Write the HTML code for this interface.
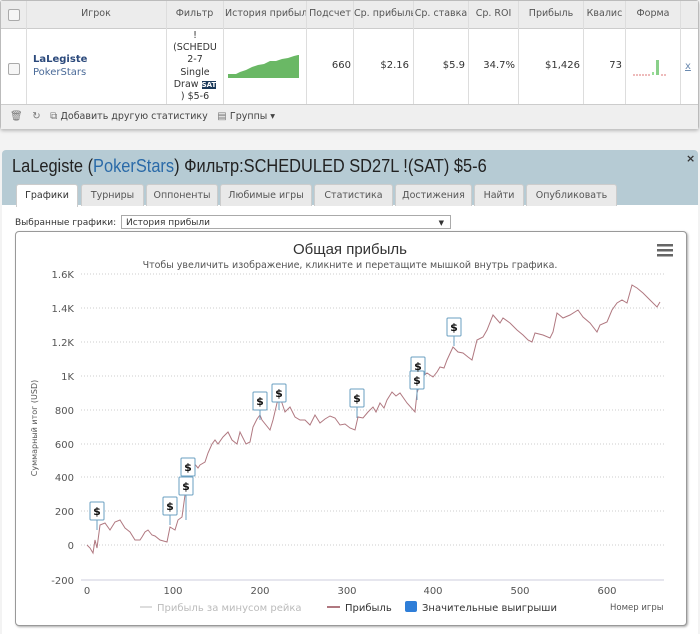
<!DOCTYPE html>
<html><head><meta charset="utf-8"><style>
body{margin:0;width:700px;height:634px;background:#f3f3f3;font-family:"DejaVu Sans","Liberation Sans",sans-serif;font-size:10px;color:#333;position:relative;overflow:hidden}
.a{position:absolute}
#tbl{left:0;top:0;width:697px;height:127px;border:1px solid #bbb;border-radius:3px;background:#fff;box-shadow:0 2px 3px #bbb}
.hd{top:0;height:27px;background:#ececec;border-bottom:1px solid #ccc;width:697px}
.c{position:absolute;top:0;height:103px;border-left:1px solid #ddd}
.h{position:absolute;top:7px;font-size:9.5px;color:#555;text-align:center;white-space:nowrap;overflow:hidden}
.v{position:absolute;top:59px;font-size:10px;text-align:right;color:#333}
.ft{top:103px;height:24px;width:697px;background:#efefef;border-top:1px solid #ccc}
.cb{position:absolute;width:10px;height:10px;border:1px solid #aaa;border-radius:2px;background:#f6f6f6}
#pan{left:2px;top:150px;width:696px;height:484px;background:#b6cbd4;border-radius:4px 4px 0 0}
.tab{position:absolute;top:184px;height:21px;background:#e9e9e9;border:1px solid #ccc;border-bottom:none;border-radius:3px 3px 0 0;font-size:9.5px;color:#555;text-align:center;line-height:21px}
#cont{left:2px;top:205px;width:696px;height:429px;background:#fff}
</style></head><body>
<div id="tbl" class="a">
 <div class="a hd"></div>
 <div class="cb" style="left:7px;top:8px"></div>
 <div class="c" style="left:25px"></div><div class="c" style="left:165px"></div><div class="c" style="left:222px"></div><div class="c" style="left:305px"></div><div class="c" style="left:352px"></div><div class="c" style="left:412px"></div><div class="c" style="left:467px"></div><div class="c" style="left:517px"></div><div class="c" style="left:582px"></div><div class="c" style="left:624px"></div><div class="c" style="left:679px"></div>
 <div class="h" style="left:25px;width:140px">Игрок</div>
 <div class="h" style="left:165px;width:57px">Фильтр</div>
 <div class="h" style="left:224px;width:81px">История прибыли</div>
 <div class="h" style="left:306px;width:46px">Подсчет</div>
 <div class="h" style="left:353px;width:59px">Ср. прибыль</div>
 <div class="h" style="left:413px;width:54px">Ср. ставка</div>
 <div class="h" style="left:468px;width:49px">Ср. ROI</div>
 <div class="h" style="left:518px;width:64px">Прибыль</div>
 <div class="h" style="left:583px;width:41px">Квалис</div>
 <div class="h" style="left:625px;width:54px">Форма</div>
 <div class="cb" style="left:7px;top:62px"></div>
 <div class="a" style="left:32px;top:53px;font-size:10px;font-weight:bold;color:#2c4a7c">LaLegiste</div>
 <div class="a" style="left:32px;top:66px;font-size:10px;color:#4a6a98">PokerStars</div>
 <div class="a" style="left:166px;top:29px;width:56px;text-align:center;font-size:9.5px;line-height:12.2px">!<br>(SCHEDU<br>2-7<br>Single<br>Draw <span style="background:#1b3a5a;color:#fff;font-size:7px;font-weight:bold">SAT</span><br>) $5-6</div>
 <svg class="a" style="left:227px;top:52px" width="72" height="25"><path d="M0,24 L0,21 L8,21 L12,19 L18,17 L24,14 L30,12 L36,11 L42,8 L48,8 L54,6 L60,5 L66,3 L70,2 L71,2 L71,25 L0,25Z" fill="#6ab865"/></svg>
 <div class="v" style="left:306px;width:44px">660</div>
 <div class="v" style="left:353px;width:55px">$2.16</div>
 <div class="v" style="left:413px;width:51px">$5.9</div>
 <div class="v" style="left:468px;width:46px">34.7%</div>
 <div class="v" style="left:518px;width:61px">$1,426</div>
 <div class="v" style="left:583px;width:38px">73</div>
 <svg class="a" style="left:630px;top:57px" width="40" height="20"><path d="M2,17H20" stroke="#d77" stroke-dasharray="2,1"/><rect x="25" y="2" width="3" height="15" fill="#8ad08a"/><rect x="21" y="14" width="2" height="3" fill="#9d9"/><path d="M30,17H36" stroke="#d77" stroke-dasharray="2,1"/></svg>
 <div class="a" style="left:684px;top:60px;color:#6a8ab0;font-size:10px;text-decoration:underline">x</div>
 <div class="a ft"></div>
 <div class="a" style="left:9px;top:110px;font-size:10px;color:#777">🗑&nbsp;&nbsp;&nbsp;↻&nbsp;&nbsp;&nbsp;⧉ <span style="color:#444;font-size:9.5px">Добавить другую статистику</span>&nbsp;&nbsp;&nbsp;▤ <span style="color:#444;font-size:9.5px">Группы ▾</span></div>
</div>
<div id="pan" class="a"></div>
<div class="a" style="left:686px;top:152px;font-size:11px;font-weight:bold;color:#333">×</div>
<div class="a" style="left:12px;top:156px;font-family:'Liberation Sans',sans-serif;font-size:18px;color:#222;white-space:nowrap;transform:scaleX(0.91);transform-origin:0 0">LaLegiste (<span style="color:#2a6aa8">PokerStars</span>) Фильтр:SCHEDULED SD27L !(SAT) $5-6</div>
<div id="cont" class="a"></div>
<div class="tab" style="left:16px;width:60px;background:#fff;height:22px;color:#333">Графики</div>
<div class="tab" style="left:81px;width:61px">Турниры</div>
<div class="tab" style="left:146px;width:70px">Оппоненты</div>
<div class="tab" style="left:220px;width:90px">Любимые игры</div>
<div class="tab" style="left:314px;width:77px">Статистика</div>
<div class="tab" style="left:395px;width:75px">Достижения</div>
<div class="tab" style="left:474px;width:48px">Найти</div>
<div class="tab" style="left:526px;width:89px">Опубликовать</div>
<div class="a" style="left:15px;top:218px;font-size:9px;color:#333">Выбранные графики:</div>
<div class="a" style="left:121px;top:215px;height:14px;border:1px solid #aaa;background:#fff;font-size:9px;line-height:14px;padding-left:4px;box-sizing:border-box;width:330px">История прибыли<span style="position:absolute;right:6px;font-size:7px">▼</span></div>
<div class="a" style="left:15px;top:231px;width:670px;height:393px;border:1px solid #999;border-radius:4px;background:#fff;box-shadow:1px 1px 2px #aaa"></div>
<svg class="a" style="left:0;top:0" width="700" height="634" font-family="DejaVu Sans,Liberation Sans,sans-serif">
<text x="350" y="254" font-size="15" fill="#333" text-anchor="middle" font-family="Liberation Sans,sans-serif">Общая прибыль</text>
<text x="350" y="268" font-size="9.5" fill="#555" text-anchor="middle">Чтобы увеличить изображение, кликните и перетащите мышкой внутрь графика.</text>
<g fill="#666"><rect x="657" y="244" width="16" height="2.5"/><rect x="657" y="249" width="16" height="2.5"/><rect x="657" y="254" width="16" height="2.5"/></g>
<g stroke="#ccc" stroke-dasharray="1,2"><path d="M81,274H664M81,308H664M81,342H664M81,376H664M81,410H664M81,444H664M81,477H664M81,511H664M81,545H664"/></g>
<path d="M81,580H664" stroke="#ccd" />
<g font-size="10" fill="#555" text-anchor="end"><text x="74" y="278">1.6K</text><text x="74" y="312">1.4K</text><text x="74" y="346">1.2K</text><text x="74" y="380">1K</text><text x="74" y="414">800</text><text x="74" y="448">600</text><text x="74" y="481">400</text><text x="74" y="515">200</text><text x="74" y="549">0</text><text x="74" y="584">-200</text></g>
<g font-size="10" fill="#555" text-anchor="middle"><text x="87" y="594">0</text><text x="173" y="594">100</text><text x="260" y="594">200</text><text x="347" y="594">300</text><text x="433" y="594">400</text><text x="520" y="594">500</text><text x="607" y="594">600</text></g>
<text transform="translate(37,428) rotate(-90)" font-size="8" fill="#555" text-anchor="middle">Суммарный итог (USD)</text>
<path fill="none" stroke="#b07880" stroke-width="1" d="M87,545 L90,548 L93,553 L95,540 L97,548 L100,525 L105,523 L110,530 L115,522 L120,520 L125,528 L130,532 L135,540 L140,540 L142,537 L145,532 L148,530 L152,535 L155,536 L160,540 L167,542 L170,527 L175,530 L178,520 L182,517 L185,495 L188,460 L190,480 L193,462 L198,468 L200,465 L205,462 L208,453 L212,444 L215,440 L218,444 L223,437 L228,432 L232,440 L237,444 L240,432 L246,444 L250,442 L253,427 L257,419 L260,415 L262,420 L270,430 L273,420 L277,403 L280,397 L285,412 L290,407 L295,417 L300,420 L305,420 L310,425 L315,415 L320,423 L325,419 L330,416 L335,418 L340,425 L345,424 L350,428 L355,430 L358,417 L363,418 L368,412 L373,407 L376,412 L380,403 L384,408 L387,400 L392,392 L396,396 L400,393 L407,403 L415,412 L417,393 L422,377 L427,373 L433,377 L437,372 L440,367 L444,368 L447,360 L453,347 L458,352 L463,353 L468,357 L472,360 L477,340 L483,337 L487,330 L493,315 L500,323 L503,318 L510,323 L517,330 L523,335 L528,340 L532,342 L535,333 L543,335 L550,338 L553,332 L557,313 L563,318 L570,315 L578,310 L583,317 L590,323 L597,332 L600,325 L607,322 L612,310 L617,303 L622,300 L627,303 L632,285 L637,288 L643,293 L650,300 L657,307 L660,302"/>
<g stroke="#6a9fc0" fill="#fff" stroke-width="1">
<path d="M97,520V530M170,515V525M186,495V520M188,476V490M260,410V420M279,402V410M357,407V418M418,375V390M417,389V400M454,336V346"/>
<rect x="90" y="502" width="14" height="18" rx="1"/><rect x="163" y="497" width="14" height="18" rx="1"/><rect x="179" y="477" width="14" height="18" rx="1"/><rect x="181" y="458" width="14" height="18" rx="1"/><rect x="253" y="392" width="14" height="18" rx="1"/><rect x="272" y="384" width="14" height="18" rx="1"/><rect x="350" y="389" width="14" height="18" rx="1"/><rect x="411" y="357" width="14" height="18" rx="1"/><rect x="410" y="371" width="14" height="18" rx="1"/><rect x="447" y="318" width="14" height="18" rx="1"/>
</g>
<g font-size="11" font-weight="bold" fill="#111" text-anchor="middle"><text x="97" y="515">$</text><text x="170" y="510">$</text><text x="186" y="490">$</text><text x="188" y="471">$</text><text x="260" y="405">$</text><text x="279" y="397">$</text><text x="357" y="402">$</text><text x="418" y="370">$</text><text x="417" y="384">$</text><text x="454" y="331">$</text></g>
<path d="M140,607H152" stroke="#ddd" stroke-width="2"/><text x="157" y="611" font-size="10" fill="#bbb">Прибыль за минусом рейка</text>
<path d="M327,607H340" stroke="#b07880" stroke-width="2"/><text x="345" y="611" font-size="10" fill="#333">Прибыль</text>
<rect x="405" y="601" width="12" height="11" rx="2" fill="#2f7ed8"/><text x="422" y="611" font-size="10" fill="#333">Значительные выигрыши</text>
<text x="610" y="610" font-size="8.5" fill="#555">Номер игры</text>
</svg>
</body></html>
